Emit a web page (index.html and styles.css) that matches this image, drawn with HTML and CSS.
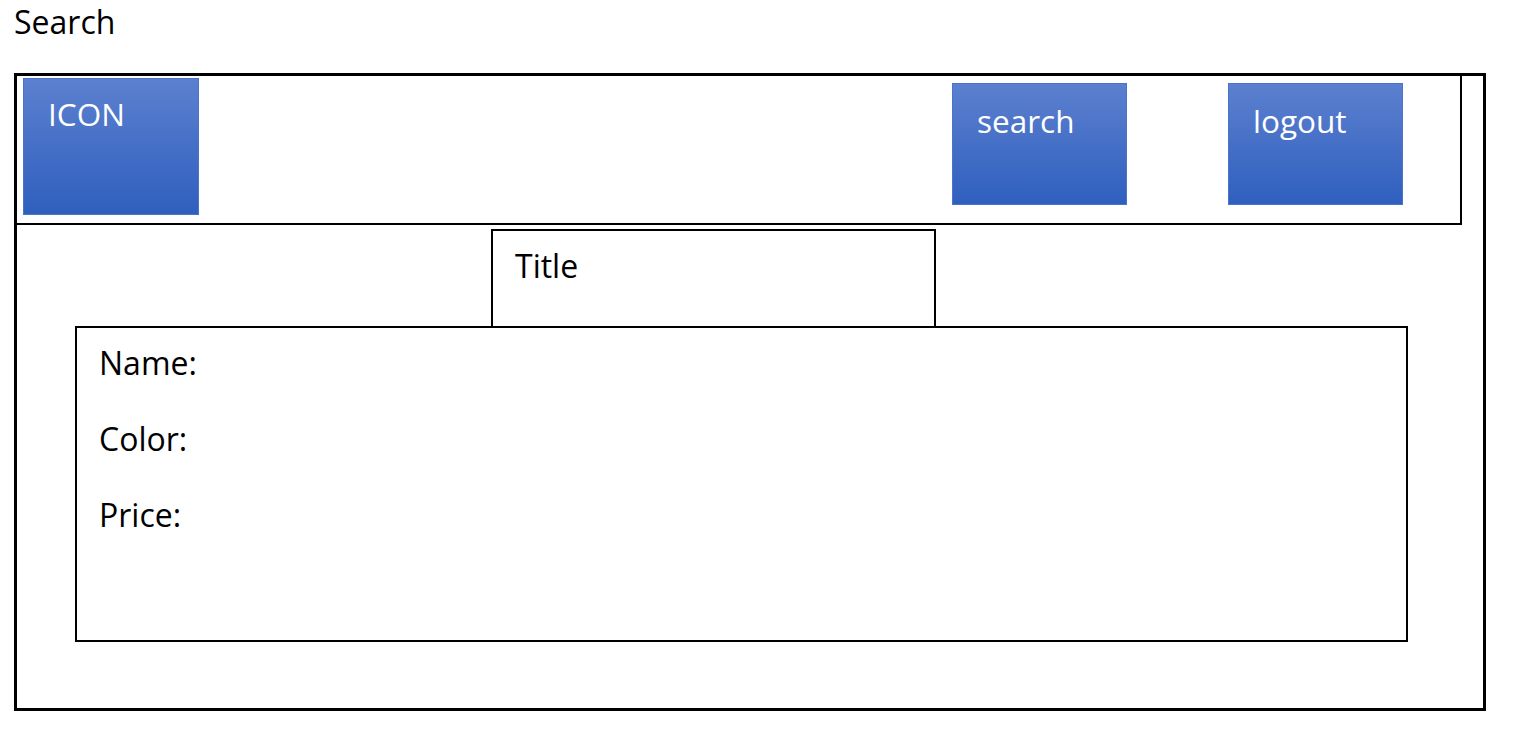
FILE: index.html
```html
<!DOCTYPE html>
<html lang="en">
<head>
<meta charset="utf-8">
<title>Search</title>
<link rel="stylesheet" href="styles.css">
</head>
<body>
<div class="page">
  <h1 class="page-title">Search</h1>
  <div class="frame">
    <header class="header">
      <div class="btn btn-icon">ICON</div>
      <div class="spacer"></div>
      <div class="btn btn-nav">search</div>
      <div class="btn btn-nav">logout</div>
    </header>
    <div class="title-box">Title</div>
    <div class="details">
      <div class="field">Name:</div>
      <div class="field">Color:</div>
      <div class="field">Price:</div>
    </div>
  </div>
</div>
</body>
</html>
```
FILE: styles.css
```css
* { box-sizing: border-box; }
html, body { margin: 0; padding: 0; background: #fff; }
body {
  font-family: "Open Sans", "Liberation Sans", sans-serif;
  color: #000;
}
.page {
  padding: 2px 0 0 14px;
}
.page-title {
  margin: 0 0 31px 0;
  font-size: 32px;
  font-weight: 400;
  line-height: 40px;
}
.frame {
  width: 1472px;
  height: 638px;
  border: 3px solid #000;
}
.header {
  display: flex;
  align-items: flex-start;
  width: 1445px;
  height: 149px;
  border-right: 2px solid #000;
  border-bottom: 2px solid #000;
  padding: 2px 57px 0 6px;
  gap: 101px;
}
.spacer { flex: 1; }
.btn {
  background: linear-gradient(#5c80cf, #2f5fbe);
  border: 1px solid #4b74c8;
  color: #fff;
  font-size: 31.5px;
  line-height: 36px;
  padding-left: 24px;
}
.btn-icon {
  width: 176px;
  height: 137px;
  padding-top: 17px;
}
.btn-nav {
  width: 175px;
  height: 122px;
  margin-top: 5px;
  padding-top: 19px;
}
.header .spacer + .btn-nav { margin-left: -101px; }
.title-box {
  margin: 4px 0 0 474px;
  width: 445px;
  height: 97px;
  border: 2px solid #000;
  border-bottom: none;
  padding: 17px 0 0 22px;
  font-size: 32px;
  line-height: 36px;
}
.details {
  margin-left: 58px;
  width: 1333px;
  height: 316px;
  border: 2px solid #000;
  padding: 17px 0 0 22px;
  display: flex;
  flex-direction: column;
  gap: 40px;
}
.field {
  font-size: 32px;
  line-height: 36px;
}
```
